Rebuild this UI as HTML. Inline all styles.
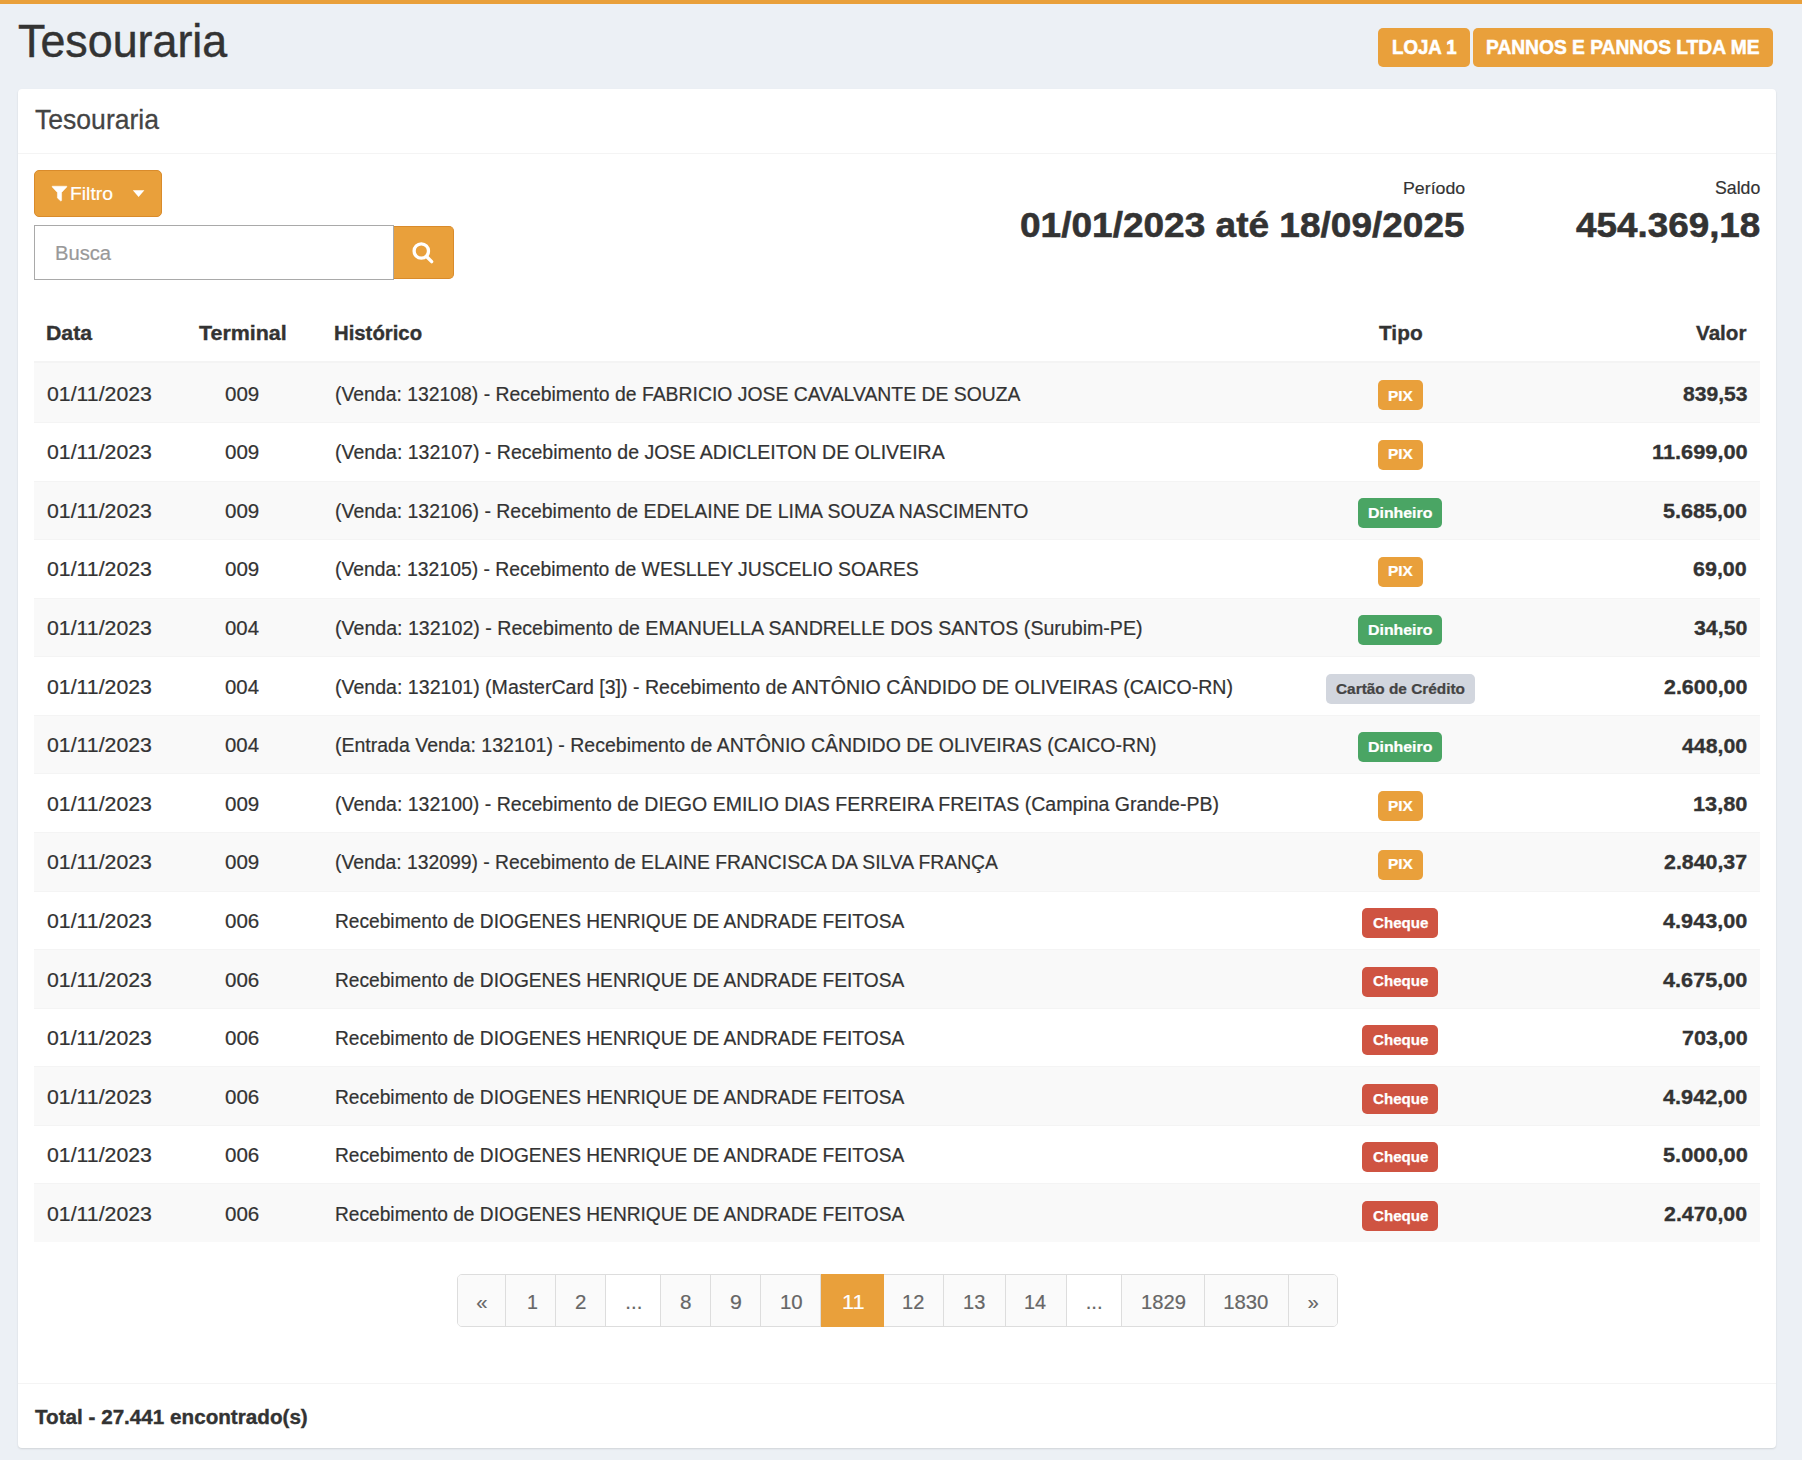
<!DOCTYPE html>
<html lang="pt-BR"><head><meta charset="utf-8"><title>Tesouraria</title>
<style>
html,body{margin:0;padding:0}
body{width:1802px;height:1460px;overflow:hidden;position:relative;background:#ecf0f5;font-family:"Liberation Sans",sans-serif;color:#333}
.t{position:absolute;line-height:1;white-space:nowrap;transform-origin:0 0}
.bar{position:absolute;left:0;top:0;width:1802px;height:4px;background:#e9a03b}
.hb{position:absolute;top:28px;height:39px;background:#e9a03b;border-radius:5px}
.card{position:absolute;left:18px;top:89px;width:1758px;height:1359px;background:#fff;border-radius:4px;box-shadow:0 1px 2px rgba(0,0,0,.12)}
.hr{position:absolute;left:18px;width:1758px;height:1px;background:#f4f4f4}
.btn{position:absolute;background:#e9a03b;border:1px solid #d98b2b;box-sizing:border-box}
.inp{position:absolute;left:34px;top:225px;width:360px;height:55px;border:1px solid #a9a9a9;box-sizing:border-box;background:#fff}
.thb{position:absolute;left:34px;top:361px;width:1726px;height:2px;background:#f4f4f4}
.stripe{position:absolute;left:34px;width:1726px;background:#f9f9f9}
.rb{position:absolute;left:34px;width:1726px;height:1px;background:#f4f4f4}
.bd{position:absolute;border-radius:5px}
.pag{position:absolute;left:457px;top:1274px;width:881.2px;height:53.2px;border:1px solid #ddd;box-sizing:border-box;border-radius:5px;overflow:hidden;background:#fafafa}
.pc{position:absolute;top:0;bottom:0;box-sizing:border-box}
svg{position:absolute;left:0;top:0}
</style></head>
<body>
<div class="bar"></div>
<div class="hb" style="left:1378px;width:92px"></div>
<div class="hb" style="left:1473px;width:300px"></div>
<div class="card"></div>
<div class="hr" style="top:153px"></div>
<div class="btn" style="left:34px;top:170px;width:128px;height:46.5px;border-radius:5px"></div>
<div class="inp"></div>
<div class="btn" style="left:394px;top:226px;width:60px;height:53px;border-left:0;border-radius:0 5px 5px 0"></div>
<div class="thb"></div>
<div class="stripe" style="top:363px;height:59px"></div>
<div class="stripe" style="top:482px;height:57px"></div>
<div class="stripe" style="top:599px;height:57px"></div>
<div class="stripe" style="top:716px;height:57px"></div>
<div class="stripe" style="top:833px;height:58px"></div>
<div class="stripe" style="top:950px;height:58px"></div>
<div class="stripe" style="top:1067px;height:58px"></div>
<div class="stripe" style="top:1184px;height:58px"></div>
<div class="rb" style="top:422px"></div>
<div class="rb" style="top:481px"></div>
<div class="rb" style="top:539px"></div>
<div class="rb" style="top:598px"></div>
<div class="rb" style="top:656px"></div>
<div class="rb" style="top:715px"></div>
<div class="rb" style="top:773px"></div>
<div class="rb" style="top:832px"></div>
<div class="rb" style="top:891px"></div>
<div class="rb" style="top:949px"></div>
<div class="rb" style="top:1008px"></div>
<div class="rb" style="top:1066px"></div>
<div class="rb" style="top:1125px"></div>
<div class="rb" style="top:1183px"></div>
<div class="bd" style="left:1378.0px;top:380.45px;width:45.0px;height:29.7px;background:#e9a03b"></div>
<div class="bd" style="left:1378.0px;top:439.95px;width:45.0px;height:29.7px;background:#e9a03b"></div>
<div class="bd" style="left:1358.0px;top:498.45px;width:83.8px;height:29.7px;background:#4aa564"></div>
<div class="bd" style="left:1378.0px;top:556.95px;width:45.0px;height:29.7px;background:#e9a03b"></div>
<div class="bd" style="left:1358.0px;top:615.45px;width:83.8px;height:29.7px;background:#4aa564"></div>
<div class="bd" style="left:1326.2px;top:673.95px;width:148.8px;height:29.7px;background:#d2d6de"></div>
<div class="bd" style="left:1358.0px;top:732.45px;width:83.8px;height:29.7px;background:#4aa564"></div>
<div class="bd" style="left:1378.0px;top:790.95px;width:45.0px;height:29.7px;background:#e9a03b"></div>
<div class="bd" style="left:1378.0px;top:849.95px;width:45.0px;height:29.7px;background:#e9a03b"></div>
<div class="bd" style="left:1362.0px;top:908.45px;width:75.9px;height:29.7px;background:#cf5442"></div>
<div class="bd" style="left:1362.0px;top:966.95px;width:75.9px;height:29.7px;background:#cf5442"></div>
<div class="bd" style="left:1362.0px;top:1025.45px;width:75.9px;height:29.7px;background:#cf5442"></div>
<div class="bd" style="left:1362.0px;top:1083.95px;width:75.9px;height:29.7px;background:#cf5442"></div>
<div class="bd" style="left:1362.0px;top:1142.45px;width:75.9px;height:29.7px;background:#cf5442"></div>
<div class="bd" style="left:1362.0px;top:1200.95px;width:75.9px;height:29.7px;background:#cf5442"></div>
<div class="pag"><div class="pc" style="left:-1.6px;width:48.5px;background:#fafafa"></div>
<div class="pc" style="left:46.9px;width:49.9px;border-left:1px solid #ddd;background:#fafafa"></div>
<div class="pc" style="left:96.8px;width:50.0px;border-left:1px solid #ddd;background:#fafafa"></div>
<div class="pc" style="left:146.8px;width:55.2px;border-left:1px solid #ddd;background:#fff"></div>
<div class="pc" style="left:202.0px;width:49.8px;border-left:1px solid #ddd;background:#fafafa"></div>
<div class="pc" style="left:251.8px;width:50.1px;border-left:1px solid #ddd;background:#fafafa"></div>
<div class="pc" style="left:301.9px;width:60.5px;border-left:1px solid #ddd;background:#fafafa"></div>
<div class="pc" style="left:362.4px;width:63.0px;border-left:1px solid #ddd;background:#e9a03b"></div>
<div class="pc" style="left:425.4px;width:59.5px;border-left:1px solid #ddd;background:#fafafa"></div>
<div class="pc" style="left:484.9px;width:62.0px;border-left:1px solid #ddd;background:#fafafa"></div>
<div class="pc" style="left:546.9px;width:60.9px;border-left:1px solid #ddd;background:#fafafa"></div>
<div class="pc" style="left:607.8px;width:55.0px;border-left:1px solid #ddd;background:#fff"></div>
<div class="pc" style="left:662.8px;width:83.2px;border-left:1px solid #ddd;background:#fafafa"></div>
<div class="pc" style="left:746.0px;width:83.7px;border-left:1px solid #ddd;background:#fafafa"></div>
<div class="pc" style="left:829.7px;width:49.1px;border-left:1px solid #ddd;background:#fafafa"></div></div>
<div style="position:absolute;left:820.6px;top:1274px;width:63.3px;height:53.2px;background:#e9a03b"></div>
<div class="hr" style="top:1383px"></div>
<svg width="1802" height="1460" viewBox="0 0 1802 1460">
  <path d="M52.2 186.2 H66.8 V187 L61.6 192.4 V200.6 L60.7 201 L57.4 197.9 V192.5 L52.2 187 Z" fill="#fff" stroke="#fff" stroke-width="0.5" stroke-linejoin="round"/>
  <path d="M132.8 190.2 H144.4 L138.6 197 Z" fill="#fff"/>
  <circle cx="421.3" cy="251" r="7.2" fill="none" stroke="#fff" stroke-width="3.3"/>
  <path d="M427 257 L431.7 261.6" stroke="#fff" stroke-width="3.4" stroke-linecap="round"/>
</svg>
<div class="t" style="left:18.30px;top:18.53px;font-size:45.34px;color:#333;transform:scaleX(0.9885);-webkit-text-stroke:0.45px #333">Tesouraria</div>
<div class="t" style="left:1391.74px;top:37.15px;font-size:20.71px;color:#fff;font-weight:bold;transform:scaleX(0.9017);-webkit-text-stroke:0.63px #fff">LOJA 1</div>
<div class="t" style="left:1485.80px;top:37.10px;font-size:20.80px;color:#fff;font-weight:bold;transform:scaleX(0.9235);-webkit-text-stroke:0.55px #fff">PANNOS E PANNOS LTDA ME</div>
<div class="t" style="left:35.18px;top:105.73px;font-size:27.54px;color:#444;transform:scaleX(0.9648);-webkit-text-stroke:0.28px #444">Tesouraria</div>
<div class="t" style="left:70.38px;top:184.78px;font-size:18.64px;color:#fff;transform:scaleX(1.0382);-webkit-text-stroke:0.19px #fff">Filtro</div>
<div class="t" style="left:54.91px;top:242.79px;font-size:20.62px;color:#999;transform:scaleX(0.9784);-webkit-text-stroke:0.21px #999">Busca</div>
<div class="t" style="left:1402.51px;top:180.31px;font-size:17.37px;color:#333;transform:scaleX(1.0227);-webkit-text-stroke:0.17px #333">Período</div>
<div class="t" style="left:1715.45px;top:179.32px;font-size:18.36px;color:#333;transform:scaleX(0.9641);-webkit-text-stroke:0.18px #333">Saldo</div>
<div class="t" style="left:1019.74px;top:208.15px;font-size:35.49px;color:#333;font-weight:bold;transform:scaleX(1.0432);-webkit-text-stroke:0.57px #333">01/01/2023 até 18/09/2025</div>
<div class="t" style="left:1575.60px;top:206.96px;font-size:35.07px;color:#333;font-weight:bold;transform:scaleX(1.0504);-webkit-text-stroke:0.56px #333">454.369,18</div>
<div class="t" style="left:46.16px;top:321.98px;font-size:21.04px;color:#333;font-weight:bold;transform:scaleX(1.0113);-webkit-text-stroke:0.34px #333">Data</div>
<div class="t" style="left:199.00px;top:321.98px;font-size:21.04px;color:#333;font-weight:bold;transform:scaleX(1.0192);-webkit-text-stroke:0.34px #333">Terminal</div>
<div class="t" style="left:334.22px;top:322.00px;font-size:20.99px;color:#333;font-weight:bold;transform:scaleX(0.9682);-webkit-text-stroke:0.38px #333">Histórico</div>
<div class="t" style="left:1378.59px;top:321.98px;font-size:21.04px;color:#333;font-weight:bold;transform:scaleX(0.9911);-webkit-text-stroke:0.34px #333">Tipo</div>
<div class="t" style="left:1696.09px;top:321.98px;font-size:21.05px;color:#333;font-weight:bold;transform:scaleX(0.9813);-webkit-text-stroke:0.34px #333">Valor</div>
<div class="t" style="left:46.83px;top:383.59px;font-size:20.62px;color:#333;transform:scaleX(1.0321);-webkit-text-stroke:0.21px #333">01/11/2023</div>
<div class="t" style="left:224.55px;top:383.59px;font-size:20.62px;color:#333;transform:scaleX(0.9970);-webkit-text-stroke:0.21px #333">009</div>
<div class="t" style="left:335.09px;top:383.59px;font-size:20.62px;color:#333;transform:scaleX(0.9400);-webkit-text-stroke:0.21px #333">(Venda: 132108) - Recebimento de FABRICIO JOSE CAVALVANTE DE SOUZA</div>
<div class="t" style="left:1682.53px;top:383.66px;font-size:20.48px;color:#333;font-weight:bold;transform:scaleX(1.0315);-webkit-text-stroke:0.33px #333">839,53</div>
<div class="t" style="left:1388.02px;top:387.55px;font-size:15.29px;color:#fff;font-weight:bold;transform:scaleX(1.0107);-webkit-text-stroke:0.24px #fff">PIX</div>
<div class="t" style="left:46.83px;top:442.03px;font-size:20.62px;color:#333;transform:scaleX(1.0321);-webkit-text-stroke:0.21px #333">01/11/2023</div>
<div class="t" style="left:224.55px;top:442.03px;font-size:20.62px;color:#333;transform:scaleX(0.9970);-webkit-text-stroke:0.21px #333">009</div>
<div class="t" style="left:335.08px;top:442.03px;font-size:20.62px;color:#333;transform:scaleX(0.9476);-webkit-text-stroke:0.21px #333">(Venda: 132107) - Recebimento de JOSE ADICLEITON DE OLIVEIRA</div>
<div class="t" style="left:1651.73px;top:441.54px;font-size:20.48px;color:#333;font-weight:bold;transform:scaleX(1.0644);-webkit-text-stroke:0.33px #333">11.699,00</div>
<div class="t" style="left:1388.02px;top:446.13px;font-size:15.29px;color:#fff;font-weight:bold;transform:scaleX(1.0107);-webkit-text-stroke:0.24px #fff">PIX</div>
<div class="t" style="left:46.83px;top:500.91px;font-size:20.62px;color:#333;transform:scaleX(1.0321);-webkit-text-stroke:0.21px #333">01/11/2023</div>
<div class="t" style="left:224.55px;top:500.91px;font-size:20.62px;color:#333;transform:scaleX(0.9970);-webkit-text-stroke:0.21px #333">009</div>
<div class="t" style="left:335.08px;top:500.91px;font-size:20.62px;color:#333;transform:scaleX(0.9447);-webkit-text-stroke:0.21px #333">(Venda: 132106) - Recebimento de EDELAINE DE LIMA SOUZA NASCIMENTO</div>
<div class="t" style="left:1663.35px;top:500.98px;font-size:20.48px;color:#333;font-weight:bold;transform:scaleX(1.0556);-webkit-text-stroke:0.33px #333">5.685,00</div>
<div class="t" style="left:1368.10px;top:504.71px;font-size:15.29px;color:#fff;font-weight:bold;transform:scaleX(1.0391);-webkit-text-stroke:0.24px #fff">Dinheiro</div>
<div class="t" style="left:46.83px;top:558.63px;font-size:20.62px;color:#333;transform:scaleX(1.0321);-webkit-text-stroke:0.21px #333">01/11/2023</div>
<div class="t" style="left:224.55px;top:558.63px;font-size:20.62px;color:#333;transform:scaleX(0.9970);-webkit-text-stroke:0.21px #333">009</div>
<div class="t" style="left:335.09px;top:558.63px;font-size:20.62px;color:#333;transform:scaleX(0.9390);-webkit-text-stroke:0.21px #333">(Venda: 132105) - Recebimento de WESLLEY JUSCELIO SOARES</div>
<div class="t" style="left:1692.70px;top:558.70px;font-size:20.48px;color:#333;font-weight:bold;transform:scaleX(1.0499);-webkit-text-stroke:0.33px #333">69,00</div>
<div class="t" style="left:1388.02px;top:563.29px;font-size:15.29px;color:#fff;font-weight:bold;transform:scaleX(1.0107);-webkit-text-stroke:0.24px #fff">PIX</div>
<div class="t" style="left:46.83px;top:618.23px;font-size:20.62px;color:#333;transform:scaleX(1.0321);-webkit-text-stroke:0.21px #333">01/11/2023</div>
<div class="t" style="left:224.55px;top:618.23px;font-size:20.62px;color:#333;transform:scaleX(0.9874);-webkit-text-stroke:0.21px #333">004</div>
<div class="t" style="left:335.08px;top:618.23px;font-size:20.62px;color:#333;transform:scaleX(0.9505);-webkit-text-stroke:0.21px #333">(Venda: 132102) - Recebimento de EMANUELLA SANDRELLE DOS SANTOS (Surubim-PE)</div>
<div class="t" style="left:1694.06px;top:618.30px;font-size:20.48px;color:#333;font-weight:bold;transform:scaleX(1.0424);-webkit-text-stroke:0.33px #333">34,50</div>
<div class="t" style="left:1368.10px;top:621.87px;font-size:15.29px;color:#fff;font-weight:bold;transform:scaleX(1.0391);-webkit-text-stroke:0.24px #fff">Dinheiro</div>
<div class="t" style="left:46.83px;top:676.99px;font-size:20.62px;color:#333;transform:scaleX(1.0321);-webkit-text-stroke:0.21px #333">01/11/2023</div>
<div class="t" style="left:224.55px;top:676.99px;font-size:20.62px;color:#333;transform:scaleX(0.9874);-webkit-text-stroke:0.21px #333">004</div>
<div class="t" style="left:335.08px;top:676.99px;font-size:20.62px;color:#333;transform:scaleX(0.9492);-webkit-text-stroke:0.21px #333">(Venda: 132101) (MasterCard [3]) - Recebimento de ANTÔNIO CÂNDIDO DE OLIVEIRAS (CAICO-RN)</div>
<div class="t" style="left:1664.02px;top:677.06px;font-size:20.48px;color:#333;font-weight:bold;transform:scaleX(1.0471);-webkit-text-stroke:0.33px #333">2.600,00</div>
<div class="t" style="left:1336.32px;top:681.05px;font-size:15.29px;color:#444;font-weight:bold;transform:scaleX(1.0057);-webkit-text-stroke:0.24px #444">Cartão de Crédito</div>
<div class="t" style="left:46.83px;top:734.73px;font-size:20.62px;color:#333;transform:scaleX(1.0321);-webkit-text-stroke:0.21px #333">01/11/2023</div>
<div class="t" style="left:224.55px;top:734.73px;font-size:20.62px;color:#333;transform:scaleX(0.9874);-webkit-text-stroke:0.21px #333">004</div>
<div class="t" style="left:335.08px;top:734.73px;font-size:20.62px;color:#333;transform:scaleX(0.9463);-webkit-text-stroke:0.21px #333">(Entrada Venda: 132101) - Recebimento de ANTÔNIO CÂNDIDO DE OLIVEIRAS (CAICO-RN)</div>
<div class="t" style="left:1682.30px;top:735.62px;font-size:20.48px;color:#333;font-weight:bold;transform:scaleX(1.0406);-webkit-text-stroke:0.33px #333">448,00</div>
<div class="t" style="left:1368.10px;top:739.03px;font-size:15.29px;color:#fff;font-weight:bold;transform:scaleX(1.0391);-webkit-text-stroke:0.24px #fff">Dinheiro</div>
<div class="t" style="left:46.83px;top:793.71px;font-size:20.62px;color:#333;transform:scaleX(1.0321);-webkit-text-stroke:0.21px #333">01/11/2023</div>
<div class="t" style="left:224.55px;top:793.71px;font-size:20.62px;color:#333;transform:scaleX(0.9970);-webkit-text-stroke:0.21px #333">009</div>
<div class="t" style="left:335.08px;top:793.71px;font-size:20.62px;color:#333;transform:scaleX(0.9473);-webkit-text-stroke:0.21px #333">(Venda: 132100) - Recebimento de DIEGO EMILIO DIAS FERREIRA FREITAS (Campina Grande-PB)</div>
<div class="t" style="left:1693.03px;top:793.78px;font-size:20.48px;color:#333;font-weight:bold;transform:scaleX(1.0628);-webkit-text-stroke:0.33px #333">13,80</div>
<div class="t" style="left:1388.02px;top:797.61px;font-size:15.29px;color:#fff;font-weight:bold;transform:scaleX(1.0107);-webkit-text-stroke:0.24px #fff">PIX</div>
<div class="t" style="left:46.83px;top:851.53px;font-size:20.62px;color:#333;transform:scaleX(1.0321);-webkit-text-stroke:0.21px #333">01/11/2023</div>
<div class="t" style="left:224.55px;top:851.53px;font-size:20.62px;color:#333;transform:scaleX(0.9970);-webkit-text-stroke:0.21px #333">009</div>
<div class="t" style="left:335.08px;top:851.53px;font-size:20.62px;color:#333;transform:scaleX(0.9375);-webkit-text-stroke:0.21px #333">(Venda: 132099) - Recebimento de ELAINE FRANCISCA DA SILVA FRANÇA</div>
<div class="t" style="left:1664.32px;top:851.60px;font-size:20.48px;color:#333;font-weight:bold;transform:scaleX(1.0433);-webkit-text-stroke:0.33px #333">2.840,37</div>
<div class="t" style="left:1388.02px;top:856.19px;font-size:15.29px;color:#fff;font-weight:bold;transform:scaleX(1.0107);-webkit-text-stroke:0.24px #fff">PIX</div>
<div class="t" style="left:46.83px;top:911.03px;font-size:20.62px;color:#333;transform:scaleX(1.0321);-webkit-text-stroke:0.21px #333">01/11/2023</div>
<div class="t" style="left:224.55px;top:911.03px;font-size:20.62px;color:#333;transform:scaleX(0.9970);-webkit-text-stroke:0.21px #333">006</div>
<div class="t" style="left:334.50px;top:911.03px;font-size:20.62px;color:#333;transform:scaleX(0.9295);-webkit-text-stroke:0.21px #333">Recebimento de DIOGENES HENRIQUE DE ANDRADE FEITOSA</div>
<div class="t" style="left:1663.10px;top:911.10px;font-size:20.48px;color:#333;font-weight:bold;transform:scaleX(1.0588);-webkit-text-stroke:0.33px #333">4.943,00</div>
<div class="t" style="left:1372.52px;top:914.78px;font-size:15.29px;color:#fff;font-weight:bold;transform:scaleX(0.9880);-webkit-text-stroke:0.25px #fff">Cheque</div>
<div class="t" style="left:46.83px;top:969.69px;font-size:20.62px;color:#333;transform:scaleX(1.0321);-webkit-text-stroke:0.21px #333">01/11/2023</div>
<div class="t" style="left:224.55px;top:969.69px;font-size:20.62px;color:#333;transform:scaleX(0.9970);-webkit-text-stroke:0.21px #333">006</div>
<div class="t" style="left:334.50px;top:969.69px;font-size:20.62px;color:#333;transform:scaleX(0.9295);-webkit-text-stroke:0.21px #333">Recebimento de DIOGENES HENRIQUE DE ANDRADE FEITOSA</div>
<div class="t" style="left:1663.10px;top:969.76px;font-size:20.48px;color:#333;font-weight:bold;transform:scaleX(1.0588);-webkit-text-stroke:0.33px #333">4.675,00</div>
<div class="t" style="left:1372.52px;top:973.36px;font-size:15.29px;color:#fff;font-weight:bold;transform:scaleX(0.9880);-webkit-text-stroke:0.25px #fff">Cheque</div>
<div class="t" style="left:46.83px;top:1028.35px;font-size:20.62px;color:#333;transform:scaleX(1.0321);-webkit-text-stroke:0.21px #333">01/11/2023</div>
<div class="t" style="left:224.55px;top:1028.35px;font-size:20.62px;color:#333;transform:scaleX(0.9970);-webkit-text-stroke:0.21px #333">006</div>
<div class="t" style="left:334.50px;top:1028.35px;font-size:20.62px;color:#333;transform:scaleX(0.9295);-webkit-text-stroke:0.21px #333">Recebimento de DIOGENES HENRIQUE DE ANDRADE FEITOSA</div>
<div class="t" style="left:1681.82px;top:1028.42px;font-size:20.48px;color:#333;font-weight:bold;transform:scaleX(1.0483);-webkit-text-stroke:0.33px #333">703,00</div>
<div class="t" style="left:1372.52px;top:1031.94px;font-size:15.29px;color:#fff;font-weight:bold;transform:scaleX(0.9880);-webkit-text-stroke:0.25px #fff">Cheque</div>
<div class="t" style="left:46.83px;top:1086.51px;font-size:20.62px;color:#333;transform:scaleX(1.0321);-webkit-text-stroke:0.21px #333">01/11/2023</div>
<div class="t" style="left:224.55px;top:1086.51px;font-size:20.62px;color:#333;transform:scaleX(0.9970);-webkit-text-stroke:0.21px #333">006</div>
<div class="t" style="left:334.50px;top:1086.51px;font-size:20.62px;color:#333;transform:scaleX(0.9295);-webkit-text-stroke:0.21px #333">Recebimento de DIOGENES HENRIQUE DE ANDRADE FEITOSA</div>
<div class="t" style="left:1663.10px;top:1086.58px;font-size:20.48px;color:#333;font-weight:bold;transform:scaleX(1.0588);-webkit-text-stroke:0.33px #333">4.942,00</div>
<div class="t" style="left:1372.52px;top:1090.52px;font-size:15.29px;color:#fff;font-weight:bold;transform:scaleX(0.9880);-webkit-text-stroke:0.25px #fff">Cheque</div>
<div class="t" style="left:46.83px;top:1144.91px;font-size:20.62px;color:#333;transform:scaleX(1.0321);-webkit-text-stroke:0.21px #333">01/11/2023</div>
<div class="t" style="left:224.55px;top:1144.91px;font-size:20.62px;color:#333;transform:scaleX(0.9970);-webkit-text-stroke:0.21px #333">006</div>
<div class="t" style="left:334.50px;top:1144.91px;font-size:20.62px;color:#333;transform:scaleX(0.9295);-webkit-text-stroke:0.21px #333">Recebimento de DIOGENES HENRIQUE DE ANDRADE FEITOSA</div>
<div class="t" style="left:1662.65px;top:1144.50px;font-size:20.48px;color:#333;font-weight:bold;transform:scaleX(1.0644);-webkit-text-stroke:0.33px #333">5.000,00</div>
<div class="t" style="left:1372.52px;top:1149.10px;font-size:15.29px;color:#fff;font-weight:bold;transform:scaleX(0.9880);-webkit-text-stroke:0.25px #fff">Cheque</div>
<div class="t" style="left:46.83px;top:1203.83px;font-size:20.62px;color:#333;transform:scaleX(1.0321);-webkit-text-stroke:0.21px #333">01/11/2023</div>
<div class="t" style="left:224.55px;top:1203.83px;font-size:20.62px;color:#333;transform:scaleX(0.9970);-webkit-text-stroke:0.21px #333">006</div>
<div class="t" style="left:334.50px;top:1203.83px;font-size:20.62px;color:#333;transform:scaleX(0.9295);-webkit-text-stroke:0.21px #333">Recebimento de DIOGENES HENRIQUE DE ANDRADE FEITOSA</div>
<div class="t" style="left:1664.32px;top:1203.90px;font-size:20.48px;color:#333;font-weight:bold;transform:scaleX(1.0433);-webkit-text-stroke:0.33px #333">2.470,00</div>
<div class="t" style="left:1372.52px;top:1207.68px;font-size:15.29px;color:#fff;font-weight:bold;transform:scaleX(0.9880);-webkit-text-stroke:0.25px #fff">Cheque</div>
<div class="t" style="left:476.14px;top:1291.63px;font-size:20.34px;color:#666;-webkit-text-stroke:0.20px #666">«</div>
<div class="t" style="left:526.67px;top:1291.63px;font-size:20.34px;color:#666;transform:scaleX(0.9658);-webkit-text-stroke:0.20px #666">1</div>
<div class="t" style="left:574.84px;top:1291.63px;font-size:20.34px;color:#666;transform:scaleX(1.0071);-webkit-text-stroke:0.20px #666">2</div>
<div class="t" style="left:625.35px;top:1291.63px;font-size:20.34px;color:#666;-webkit-text-stroke:0.20px #666">...</div>
<div class="t" style="left:680.35px;top:1291.63px;font-size:20.34px;color:#666;transform:scaleX(1.0152);-webkit-text-stroke:0.20px #666">8</div>
<div class="t" style="left:730.00px;top:1291.63px;font-size:20.34px;color:#666;transform:scaleX(1.0490);-webkit-text-stroke:0.20px #666">9</div>
<div class="t" style="left:780.23px;top:1291.63px;font-size:20.34px;color:#666;transform:scaleX(1.0027);-webkit-text-stroke:0.20px #666">10</div>
<div class="t" style="left:842.44px;top:1291.63px;font-size:20.34px;color:#fff;transform:scaleX(1.0675);-webkit-text-stroke:0.20px #fff">11</div>
<div class="t" style="left:901.95px;top:1291.63px;font-size:20.34px;color:#666;transform:scaleX(0.9842);-webkit-text-stroke:0.20px #666">12</div>
<div class="t" style="left:962.95px;top:1291.63px;font-size:20.34px;color:#666;transform:scaleX(0.9842);-webkit-text-stroke:0.20px #666">13</div>
<div class="t" style="left:1023.56px;top:1291.63px;font-size:20.34px;color:#666;transform:scaleX(0.9740);-webkit-text-stroke:0.20px #666">14</div>
<div class="t" style="left:1085.65px;top:1291.63px;font-size:20.34px;color:#666;-webkit-text-stroke:0.20px #666">...</div>
<div class="t" style="left:1140.93px;top:1291.63px;font-size:20.34px;color:#666;transform:scaleX(0.9924);-webkit-text-stroke:0.20px #666">1829</div>
<div class="t" style="left:1223.21px;top:1291.63px;font-size:20.34px;color:#666;-webkit-text-stroke:0.20px #666">1830</div>
<div class="t" style="left:1307.44px;top:1291.63px;font-size:20.34px;color:#666;-webkit-text-stroke:0.20px #666">»</div>
<div class="t" style="left:35.29px;top:1405.74px;font-size:21.13px;color:#333;font-weight:bold;transform:scaleX(0.9776);-webkit-text-stroke:0.39px #333">Total - 27.441 encontrado(s)</div>
</body></html>
